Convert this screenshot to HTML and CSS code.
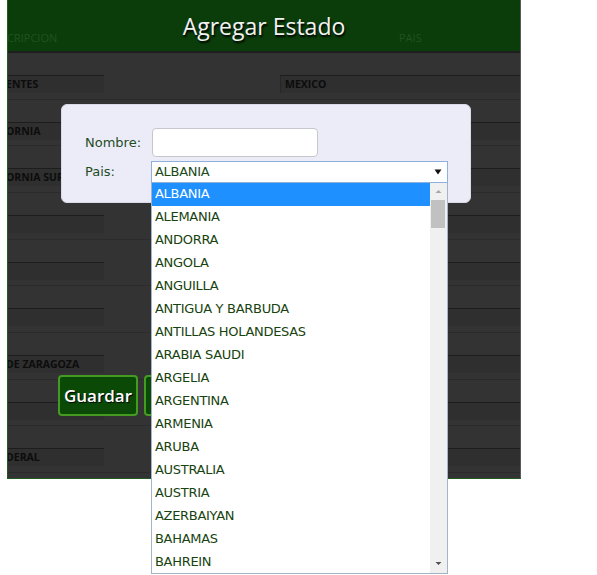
FILE: index.html
```html
<!DOCTYPE html>
<html lang="es">
<head>
<meta charset="utf-8">
<title>Agregar Estado</title>
<link rel="stylesheet" href="styles.css">
</head>
<body>
<div class="panel">
  <div class="head">
    <div class="cols"><span class="col-label">CRIPCION</span><span class="col-label">PAIS</span></div>
    <h1 class="title">Agregar Estado</h1>
  </div>
  <div class="rows">
    <div class="row"><div class="box box-left">ENTES</div><div class="box box-right">MEXICO</div></div>
    <div class="row"><div class="box box-left">ORNIA</div><div class="box box-right">MEXICO</div></div>
    <div class="row"><div class="box box-left">ORNIA SUR</div><div class="box box-right">MEXICO</div></div>
    <div class="row"><div class="box box-left"></div><div class="box box-right">MEXICO</div></div>
    <div class="row"><div class="box box-left"></div><div class="box box-right">MEXICO</div></div>
    <div class="row"><div class="box box-left"></div><div class="box box-right">MEXICO</div></div>
    <div class="row"><div class="box box-left">DE ZARAGOZA</div><div class="box box-right">MEXICO</div></div>
    <div class="row"><div class="box box-left"></div><div class="box box-right">MEXICO</div></div>
    <div class="row"><div class="box box-left">DERAL</div><div class="box box-right">MEXICO</div></div>
  </div>
</div>

<div class="actions">
  <button class="btn" type="button">Guardar</button>
  <button class="btn btn-hidden-text" type="button">Cancelar</button>
</div>

<div class="modal">
  <label class="lbl" for="nombre">Nombre:</label>
  <input class="field" id="nombre" type="text">
  <span class="lbl">Pais:</span>
  <div class="select">
    <span class="select-value">ALBANIA</span>
    <svg class="caret" width="8" height="6" viewBox="0 0 8 6"><path d="M0.5 0.5 H7.5 L4 5.5 Z" fill="#111"/></svg>
    <div class="list">
      <ul class="options">
        <li class="opt opt-active">ALBANIA</li>
        <li class="opt">ALEMANIA</li>
        <li class="opt">ANDORRA</li>
        <li class="opt">ANGOLA</li>
        <li class="opt">ANGUILLA</li>
        <li class="opt">ANTIGUA Y BARBUDA</li>
        <li class="opt">ANTILLAS HOLANDESAS</li>
        <li class="opt">ARABIA SAUDI</li>
        <li class="opt">ARGELIA</li>
        <li class="opt">ARGENTINA</li>
        <li class="opt">ARMENIA</li>
        <li class="opt">ARUBA</li>
        <li class="opt">AUSTRALIA</li>
        <li class="opt">AUSTRIA</li>
        <li class="opt">AZERBAIYAN</li>
        <li class="opt">BAHAMAS</li>
        <li class="opt">BAHREIN</li>
      </ul>
      <div class="scrollbar">
        <svg class="sb-arrow" width="17" height="16" viewBox="0 0 17 16"><path d="M5.5 10 H11.5 L8.5 7 Z" fill="#a6a6a6"/></svg>
        <div class="sb-thumb"></div>
        <div class="sb-track"></div>
        <svg class="sb-arrow" width="17" height="16" viewBox="0 0 17 16"><path d="M5.5 5 H11.5 L8.5 8 Z" fill="#505050"/></svg>
      </div>
    </div>
  </div>
</div>
</body>
</html>
```
FILE: styles.css
```css
html, body {
  margin: 0;
  padding: 0;
  background: #ffffff;
}
body {
  position: relative;
  width: 597px;
  height: 575px;
  overflow: hidden;
  font-family: "DejaVu Sans", sans-serif;
}

/* background table panel */
.panel {
  margin-left: 7px;
  width: 514px;
  height: 479px;
  box-sizing: border-box;
  background: #333333;
  border-left: 1px solid #1f5a1f;
  border-right: 1px solid #5a5a5a;
  border-bottom: 1px solid #1f5a1f;
  overflow: hidden;
}
.head {
  display: grid;
  height: 53px;
  box-sizing: border-box;
  background: #0a3d0a;
  border-bottom: 2px solid #1e1e1e;
}
.head > * {
  grid-area: 1 / 1;
}
.cols {
  display: grid;
  grid-template-columns: 392px auto;
  padding-top: 32px;
  font-family: "Open Sans", sans-serif;
  font-size: 11px;
  line-height: 12px;
  color: #1f531f;
}
.col-label {
  margin-left: -1px;
}
.title {
  margin: 0;
  padding-top: 11px;
  text-align: center;
  font-family: "Open Sans", sans-serif;
  font-weight: 400;
  font-size: 23px;
  line-height: 30px;
  color: #f2f2f2;
  text-shadow: 1px 2px 2px #000000;
}
.rows {
  display: grid;
  grid-auto-rows: 46.67px;
}
.row {
  display: grid;
  grid-template-columns: 96px 176px 260px;
  align-items: start;
  padding-top: 22px;
  box-sizing: border-box;
  border-bottom: 1px solid #2b2b2b;
}
.box {
  height: 18px;
  box-sizing: border-box;
  background: #2f2f2f;
  border-top: 1px solid #1d1d1d;
  font-family: "Open Sans", sans-serif;
  font-weight: 700;
  font-size: 10.5px;
  line-height: 16px;
  color: #0c0c0c;
  white-space: nowrap;
  overflow: hidden;
}
.box-left {
  text-indent: -2px;
}
.box-right {
  grid-column: 3;
  padding-left: 4px;
  border-left: 1px solid #262626;
}

/* modal */
.modal {
  position: absolute;
  left: 61px;
  top: 104px;
  width: 410px;
  height: 99px;
  box-sizing: border-box;
  background: #ececf9;
  border: 1px solid #d9d9ea;
  border-radius: 6px;
  padding: 23px 0 0 23px;
  display: grid;
  grid-template-columns: 66px 297px;
  grid-template-rows: 29px 22px;
  row-gap: 4px;
  align-items: center;
  z-index: 2;
}
.lbl {
  font-size: 13px;
  color: #1f4d1f;
  line-height: 16px;
}
.field {
  margin: 0 0 0 1px;
  width: 166px;
  height: 29px;
  box-sizing: border-box;
  border: 1px solid #c6c6cf;
  border-radius: 4px;
  background: #ffffff;
  padding: 0;
}
.select {
  position: relative;
  height: 22px;
  box-sizing: border-box;
  border: 1px solid #8eb0da;
  background: #ffffff;
  display: flex;
  align-items: center;
  justify-content: space-between;
  padding: 0 5px 0 3px;
}
.select-value {
  font-size: 13px;
  letter-spacing: -0.3px;
  color: #1a4a1a;
  line-height: 20px;
}
.caret {
  display: block;
}
.list {
  position: absolute;
  top: 21px;
  left: -1px;
  width: 297px;
  height: 391px;
  box-sizing: border-box;
  background: #ffffff;
  border: 1px solid #a3b4c9;
  border-top: none;
  display: flex;
  overflow: hidden;
}
.options {
  list-style: none;
  margin: 0;
  padding: 0;
  flex: 1;
}
.opt {
  height: 23px;
  padding-left: 3px;
  font-size: 13px;
  letter-spacing: -0.3px;
  line-height: 22px;
  color: #17430f;
  white-space: nowrap;
}
.opt-active {
  background: #1e90ff;
  color: #ffffff;
}
.scrollbar {
  width: 17px;
  background: #f0f0f0;
  display: flex;
  flex-direction: column;
}
.sb-arrow {
  display: block;
  flex: none;
}
.sb-thumb {
  margin: 1px 2px 0 1px;
  height: 28px;
  background: #c1c1c1;
}
.sb-track {
  flex: 1;
}

/* buttons */
.actions {
  position: absolute;
  left: 58px;
  top: 375px;
  display: flex;
  gap: 6px;
  z-index: 1;
}
.btn {
  width: 80px;
  height: 41px;
  box-sizing: border-box;
  margin: 0;
  padding: 0;
  background: #0b4a06;
  border: 2px solid #459a22;
  border-radius: 4px;
  font-family: "Open Sans", sans-serif;
  font-weight: 600;
  font-size: 17px;
  color: #ffffff;
  text-shadow: 1px 1px 1px #000000;
}
.btn-hidden-text {
  padding-left: 16px;
  text-align: left;
}
```
